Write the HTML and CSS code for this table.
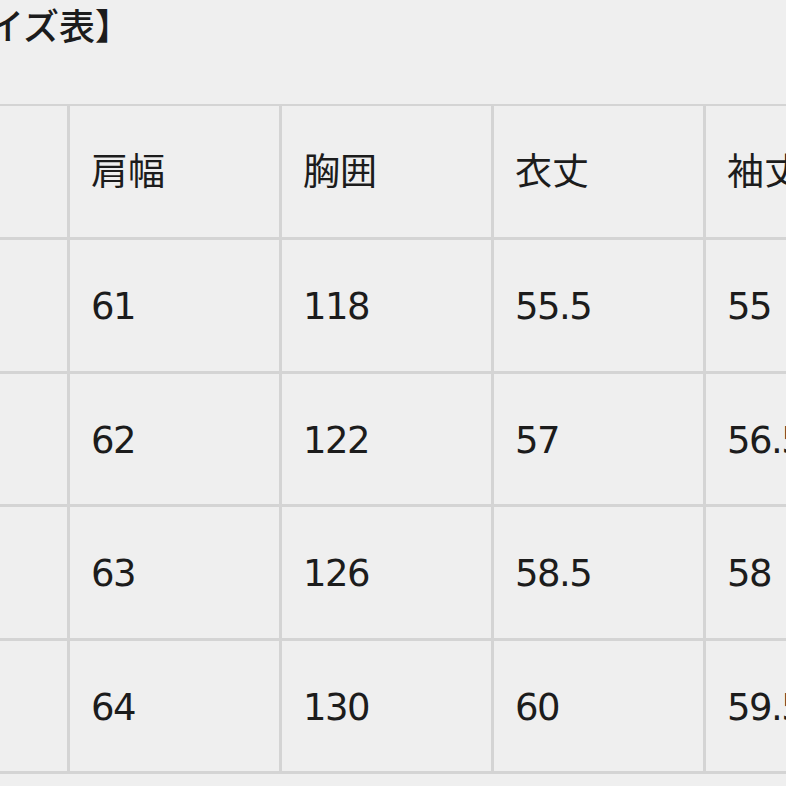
FILE: index.html
```html
<!DOCTYPE html>
<html lang="ja">
<head>
<meta charset="utf-8">
<link rel="stylesheet" href="styles.css">
</head>
<body>
<div class="page">
  <h1 class="title">【サイズ表】</h1>
  <table class="size-table">
    <tr>
      <th>サイズ</th><th>肩幅</th><th>胸囲</th><th>衣丈</th><th>袖丈</th>
    </tr>
    <tr><td>S</td><td>61</td><td>118</td><td>55.5</td><td>55</td></tr>
    <tr><td>M</td><td>62</td><td>122</td><td>57</td><td>56.5</td></tr>
    <tr><td>L</td><td>63</td><td>126</td><td>58.5</td><td>58</td></tr>
    <tr><td>XL</td><td>64</td><td>130</td><td>60</td><td>59.5</td></tr>
  </table>
</div>
</body>
</html>
```
FILE: styles.css
```css
html, body {
  margin: 0;
  padding: 0;
  overflow: hidden;
  background: #efefef;
}
body {
  font-family: "DejaVu Sans", "Noto Sans CJK JP", sans-serif;
  color: #1c1c1c;
  width: 786px;
  height: 786px;
}
.page {
  margin-left: -145px;
  width: 1200px;
}
.title {
  margin: 0;
  padding-left: 61px;
  font-family: "Noto Sans CJK JP", sans-serif;
  font-size: 36px;
  font-weight: 500;
  line-height: 48px;
}
.size-table {
  margin-top: 56px;
  border-collapse: collapse;
  table-layout: fixed;
  width: 1060px;
}
.size-table th,
.size-table td {
  width: 212px;
  height: 133.6px;
  padding: 0 0 0 21px;
  box-sizing: border-box;
  border: 3px solid #d4d4d4;
  text-align: left;
  vertical-align: middle;
  font-size: 37px;
  font-weight: 400;
  line-height: 1.2;
}
.size-table th {
  font-family: "Noto Sans CJK JP", sans-serif;
  padding-bottom: 4px;
}
.size-table tr:first-child th {
  border-top-width: 2px;
}
.size-table td {
  padding-top: 4px;
  letter-spacing: -1.5px;
}
```
